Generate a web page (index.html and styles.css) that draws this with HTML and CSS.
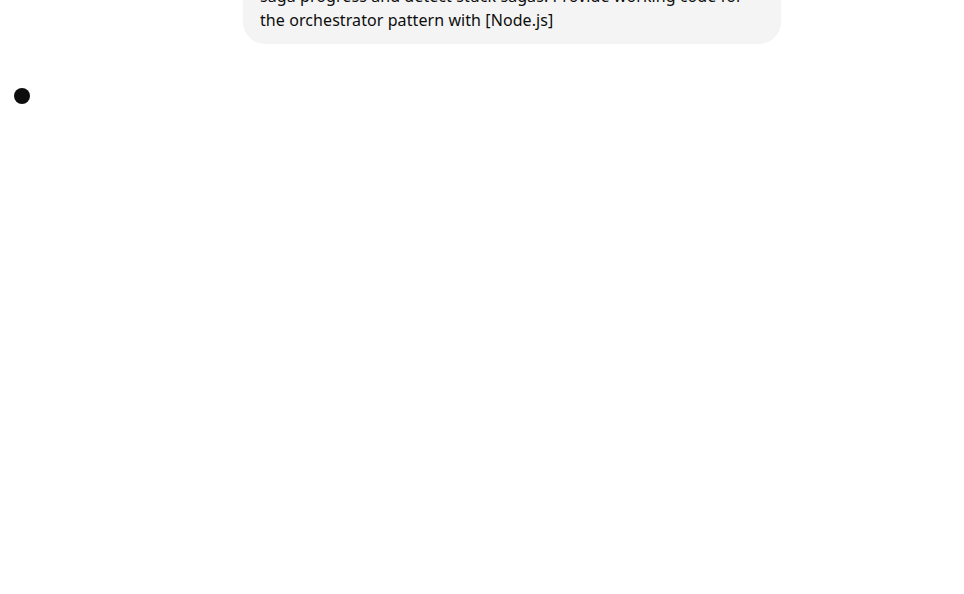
FILE: index.html
```html
<!DOCTYPE html>
<html>
<head>
<meta charset="utf-8">
<link rel="stylesheet" href="styles.css">
</head>
<body>
<main class="thread">
  <div class="row-user">
    <div class="bubble">Explain how to implement the saga pattern and how to monitor<br>saga progress and detect stuck sagas. Provide working code for<br>the orchestrator pattern with [Node.js]</div>
  </div>
  <div class="row-assistant">
    <span class="dot"></span>
  </div>
</main>
</body>
</html>
```
FILE: styles.css
```css
html, body {
  margin: 0;
  padding: 0;
  background: #ffffff;
  overflow: hidden;
}
.thread {
  margin-top: -52px;
  font-family: "Noto Sans", "Liberation Sans", Arial, sans-serif;
  color: #0d0d0d;
}
.row-user {
  display: flex;
  padding-left: 243px;
}
.bubble {
  width: 504px;
  background: #f4f4f4;
  border-radius: 22px;
  padding: 12px 17px;
  font-size: 16px;
  line-height: 24px;
  letter-spacing: 0.08px;
  white-space: nowrap;
}
.row-assistant {
  display: flex;
  padding: 44px 0 0 14px;
}
.dot {
  width: 16px;
  height: 16px;
  border-radius: 50%;
  background: #0d0d0d;
}
```
